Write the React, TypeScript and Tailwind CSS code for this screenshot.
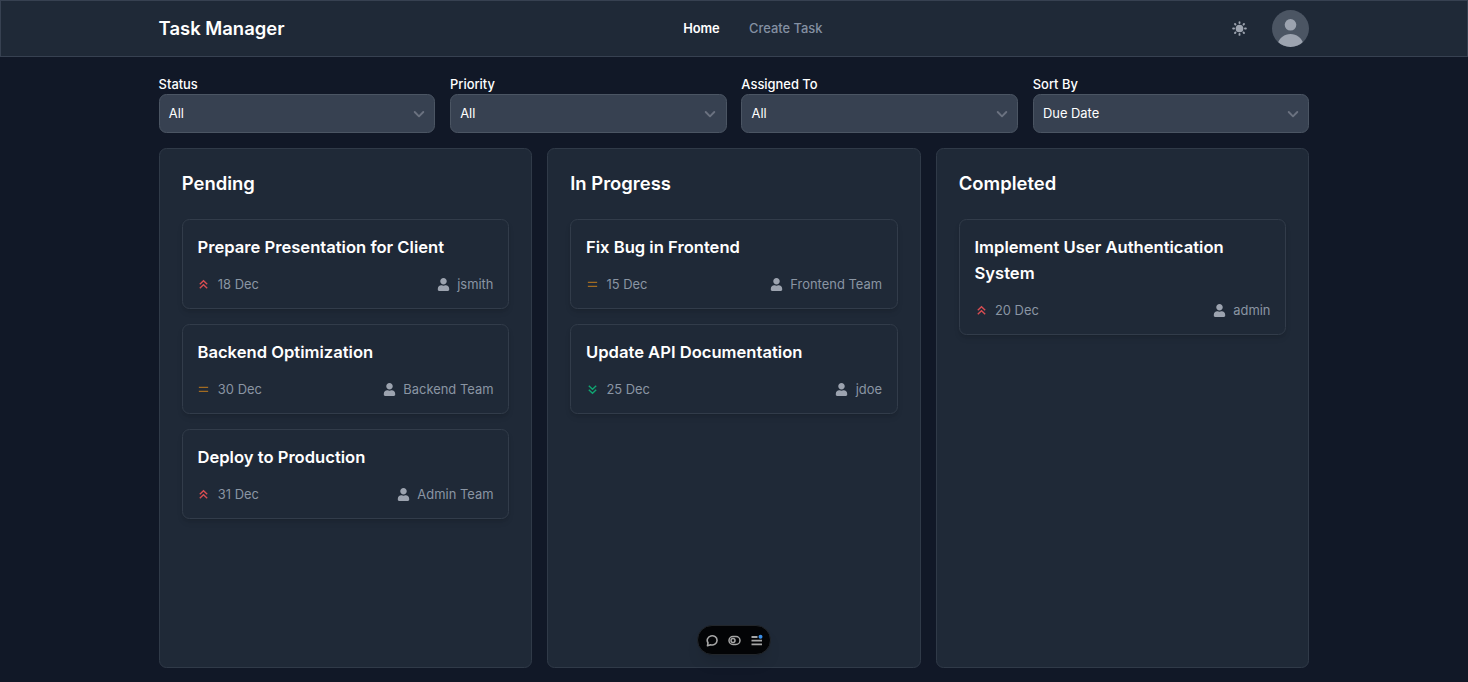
import React from "react";
import { FaUser } from "react-icons/fa";

type Level = "high" | "medium" | "low";
type Task = { title: string; date: string; level: Level; who: string };

const filters = [
  { label: "Status", value: "All" },
  { label: "Priority", value: "All" },
  { label: "Assigned To", value: "All" },
  { label: "Sort By", value: "Due Date" },
];

const columns: { name: string; tasks: Task[] }[] = [
  {
    name: "Pending",
    tasks: [
      { title: "Prepare Presentation for Client", date: "18 Dec", level: "high", who: "jsmith" },
      { title: "Backend Optimization", date: "30 Dec", level: "medium", who: "Backend Team" },
      { title: "Deploy to Production", date: "31 Dec", level: "high", who: "Admin Team" },
    ],
  },
  {
    name: "In Progress",
    tasks: [
      { title: "Fix Bug in Frontend", date: "15 Dec", level: "medium", who: "Frontend Team" },
      { title: "Update API Documentation", date: "25 Dec", level: "low", who: "jdoe" },
    ],
  },
  {
    name: "Completed",
    tasks: [
      { title: "Implement User Authentication System", date: "20 Dec", level: "high", who: "admin" },
    ],
  },
];

const levelPaths: Record<Level, string> = {
  high: "M3 6.700 7 2.900l4 3.800M3 11 7 7.200l4 3.800",
  medium: "M2 4.700h10M2 9h10",
  low: "M3 3 7 6.800 11 3M3 7.300l4 3.800 4-3.800",
};
const levelColors: Record<Level, string> = {
  high: "text-[#d94d52]",
  medium: "text-[#a16b22]",
  low: "text-[#10a572]",
};

function LevelIcon({ level }: { level: Level }) {
  return (
    <svg viewBox="0 0 14 14" className={`h-[13px] w-[13px] ${levelColors[level]}`} fill="none" stroke="currentColor" strokeWidth="1.5">
      <path d={levelPaths[level]} />
    </svg>
  );
}

function Sun() {
  return (
    <svg viewBox="0 0 16 16" className="h-[15px] w-[15px] text-[#9ca3af]" fill="currentColor" stroke="currentColor" strokeWidth="2" strokeLinecap="round">
      <circle cx="8" cy="8" r="4.100" stroke="none" />
      <path d="M8 1.200v1M8 13.800v1M1.200 8h1M13.800 8h1M3.200 3.200l.5.5M12.300 12.300l.5.5M3.200 12.800l.5-.5M12.300 3.700l.5-.5" />
    </svg>
  );
}

function Avatar() {
  return (
    <div className="h-[37px] w-[37px] overflow-hidden rounded-full bg-[#4b5563]">
      <svg viewBox="0 0 37 37" className="h-full w-full" fill="#9ca3af">
        <circle cx="18.500" cy="14.800" r="5.800" />
        <path d="M5.500 34C7.500 27.700 12.300 24 18.500 24s11 3.700 13 10v4h-26z" />
      </svg>
    </div>
  );
}

function TaskCard({ task }: { task: Task }) {
  return (
    <article className="rounded-[7.400px] border border-[#323c4a] bg-[#1f2937] px-[14.750px] pt-[14px] pb-[14.500px] shadow-md">
      <h3 className="text-[16.600px] leading-[26px] font-semibold text-white">{task.title}</h3>
      <div className="mt-[15.550px] flex h-[18.440px] items-center justify-between text-[12.910px] tracking-[0.010px] text-[#8a95a3]">
        <span className="flex items-center gap-[7.400px]">
          <LevelIcon level={task.level} />
          {task.date}
        </span>
        <span className="flex items-center gap-[7.400px]">
          <FaUser className="h-[13px] w-[13px] text-[#9ca3af]" />
          {task.who}
        </span>
      </div>
    </article>
  );
}

export default function App() {
  return (
    <div className="flex h-screen flex-col overflow-hidden bg-[#111827] font-['Inter',sans-serif] text-white">
      <header className="h-[57px] shrink-0 border border-[#374151] bg-[#1f2937]">
        <div className="mx-auto flex h-full w-[1150.800px] items-center justify-between">
          <span className="text-[18.440px] font-semibold">Task Manager</span>
          <nav className="flex gap-[29.500px] pt-px text-[12.910px]">
            <a className="font-semibold tracking-[-0.150px] text-white">Home</a>
            <a className="font-medium text-[#8490a2]">Create Task</a>
          </nav>
          <div className="flex items-center gap-[25.500px] pl-[10.500px]">
            <Sun />
            <Avatar />
          </div>
        </div>
      </header>

      <main className="mx-auto flex w-[1150.800px] flex-1 flex-col pt-[18px] pb-[14px]">
        <div className="grid grid-cols-4 gap-[14.750px]">
          {filters.map((f) => (
            <div key={f.label}>
              <div className="h-[19px] text-[12.910px] leading-[18.440px] font-medium">{f.label}</div>
              <div className="flex h-[39px] items-center justify-between rounded-[7.400px] border border-[#4b5563] bg-[#374151] px-[9.200px] text-[12.910px]">
                {f.value}
                <svg viewBox="0 0 12 12" className="h-3 w-3" fill="none" stroke="#6b7280" strokeWidth="1.900" strokeLinecap="round" strokeLinejoin="round">
                  <path d="M1.700 4 6 8.300 10.300 4" />
                </svg>
              </div>
            </div>
          ))}
        </div>

        <div className="mt-[14.600px] grid flex-1 grid-cols-3 gap-[14.750px]">
          {columns.map((c) => (
            <section key={c.name} className="rounded-[7.400px] border border-[#303a48] bg-[#1f2937] px-[22.130px] pt-[22.130px]">
              <h2 className="text-[18.440px] leading-[25.800px] font-semibold">{c.name}</h2>
              <div className="mt-[22px] flex flex-col gap-[14.750px]">
                {c.tasks.map((t) => (
                  <TaskCard key={t.title} task={t} />
                ))}
              </div>
            </section>
          ))}
        </div>
      </main>

      <div className="fixed bottom-[27px] left-1/2 flex h-[30px] w-[74px] -translate-x-1/2 items-center justify-center gap-[9px] rounded-full border border-[#22262b] bg-[#030406] text-[#a6a6a6] shadow-lg">
        <svg viewBox="0 0 13 13" className="h-[13px] w-[13px]" fill="none" stroke="currentColor" strokeWidth="1.600">
          <path d="M1.500 11.700 2 8.800A4.900 4.600 0 1 1 4.600 10.700z" strokeLinejoin="round" />
        </svg>
        <svg viewBox="0 0 13 13" className="h-[13px] w-[13px]" fill="none" stroke="currentColor" strokeWidth="1.500">
          <rect x="1" y="2.500" width="11" height="8" rx="4" />
          <circle cx="5" cy="6.500" r="2" />
        </svg>
        <svg viewBox="0 0 13 13" className="h-[13px] w-[13px]" fill="none" stroke="currentColor" strokeWidth="1.800">
          <path d="M1.500 3h6M1.500 6.700h10.500M1.500 10.300h10.500" />
          <circle cx="10.500" cy="2.700" r="2" fill="#3b8fe8" stroke="none" />
        </svg>
      </div>
    </div>
  );
}
